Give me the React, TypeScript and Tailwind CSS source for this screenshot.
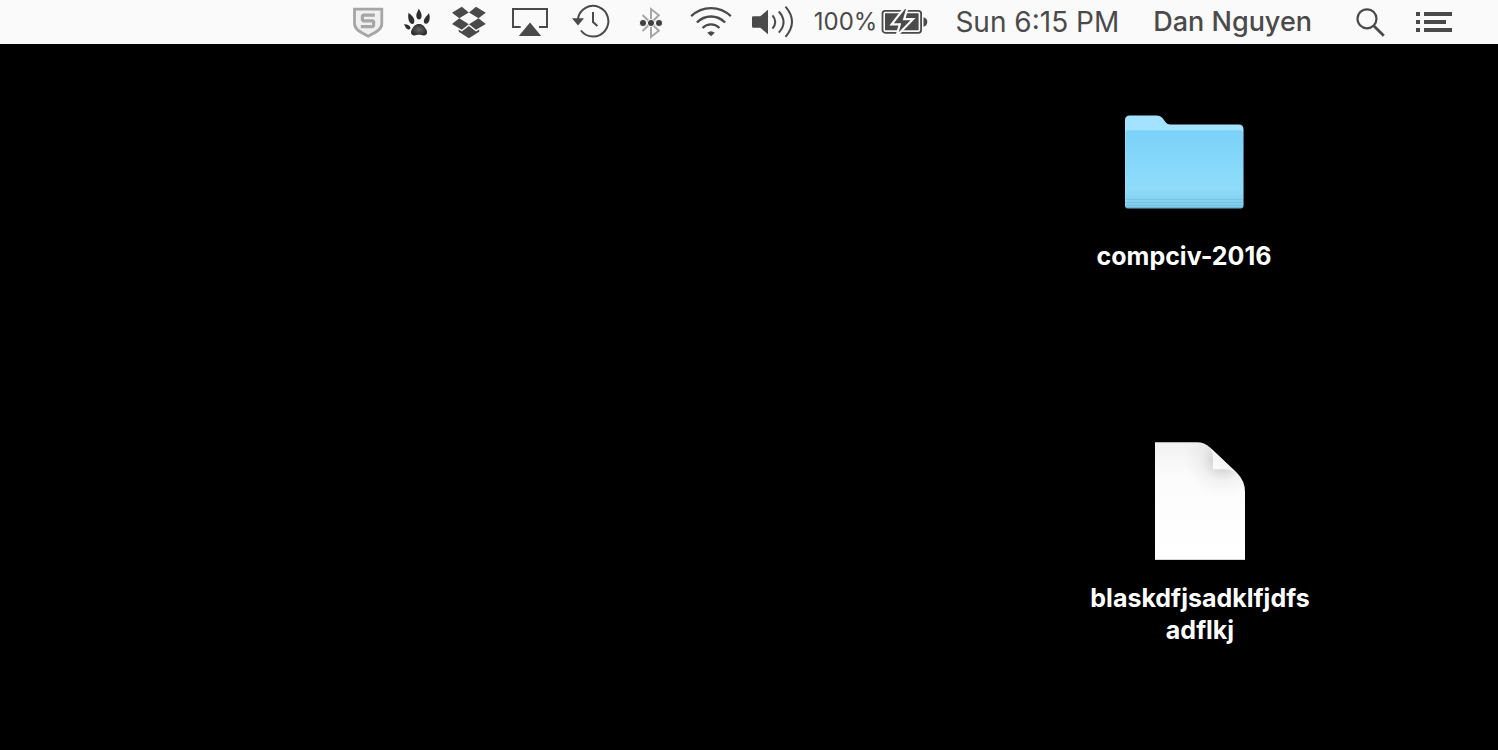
import type { ReactNode } from 'react';

type IconProps = { className: string; viewBox: string; children: ReactNode };

function Icon({ className, viewBox, children }: IconProps) {
  return (
    <svg className={`block h-11 shrink-0 ${className}`} viewBox={viewBox} fill="none" aria-hidden="true">
      {children}
    </svg>
  );
}

function MenuButton({ label, children }: { label: string; children: ReactNode }) {
  return (
    <button type="button" aria-label={label} className="shrink-0">
      {children}
    </button>
  );
}

function ShieldIcon() {
  return (
    <Icon className="w-8" viewBox="0 0 32 44">
      <path d="M2.5 9.2H29.8V23.5C29.8 29 25.5 31.5 16.2 36.2C7 31.5 2.5 29 2.5 23.5Z" fill="#f0f0f0" stroke="#a6a6a6" strokeWidth="2.800" />
      <path d="M22.800 15.200H11.400L10.400 16.200V19.800L11.400 20.800H20.800L21.600 21.600V25.600L20.600 26.600H8.800" stroke="#a6a6a6" strokeWidth="3.200" />
    </Icon>
  );
}

function PawIcon() {
  return (
    <Icon className="w-7" viewBox="0 0 28 44">
      <defs>
        <radialGradient id="pad">
          <stop offset="0" stopColor="#666" />
          <stop offset="1" stopColor="#2e2e2e" />
        </radialGradient>
      </defs>
      <path d="M15 24C19 24 20.200 26.500 21.800 28.800C24 32 23.200 35 20.600 35.400C18.500 35.700 17 34.800 15 34.800C13 34.800 11.500 35.700 9.500 35.400C6.900 35 6.100 32 8.200 28.800C9.800 26.500 11 24 15 24Z" fill="url(#pad)" />
      <g fill="#2e2e2e">
        <path d="M14.800 8.800C16.300 11.500 17.600 13.200 17.600 15.600C17.600 18 16.500 19.600 15 19.600C13.500 19.600 12.300 18 12.300 15.600C12.300 13.200 13.800 11.500 14.800 8.800Z" />
        <path d="M4.500 12.800C7.500 15 9.800 17.200 10.300 20C10.700 22.400 9.700 24 8.300 24C5.300 24 3.400 19 4.500 12.800Z" />
        <path d="M25 13.200C26.800 18.500 25 23.400 22.200 23.700C20.500 23.900 19.500 22.300 19.900 20.300C20.500 17.500 23 15.800 25 13.200Z" />
        <path d="M0 24.200C3.500 24 6 25.500 6.400 27.500C6.700 29 5.300 29.900 3.700 29.300C1.700 28.600 1.200 26.300 0 24.200Z" />
      </g>
    </Icon>
  );
}

function DropboxIcon() {
  return (
    <Icon className="w-9" viewBox="0 0 36 44">
      <path
        d="M9.800 6.800L16.800 12.400L7.300 18.300L0 12.800ZM24 6.800L17 12.400L26.500 18.300L33.800 12.800ZM0 24L7.300 18.300L16.800 24.200L9.800 29.700ZM33.800 24L26.500 18.300L17 24.200L24 29.700ZM16.900 26L24 31.400L27.200 29.500V31.800L16.900 38.200L6.700 31.800V29.500L9.800 31.400Z"
        fill="#4a4a4a"
      />
    </Icon>
  );
}

function AirPlayIcon() {
  return (
    <Icon className="w-11" viewBox="0 0 44 44">
      <path d="M12.700 27H5V9H39V27H31" stroke="#4a4a4a" strokeWidth="2" />
      <path d="M22 22.600L33.200 36H10.800Z" fill="#4a4a4a" />
    </Icon>
  );
}

function TimeMachineIcon() {
  return (
    <Icon className="w-10" viewBox="0 0 40 44">
      <path d="M5.900 19A15.300 15.300 0 1 1 8.900 30.500" stroke="#4a4a4a" strokeWidth="2" />
      <path d="M0 18.300H12L6 25.400Z" fill="#4a4a4a" />
      <path d="M21 12V22L25.400 26" stroke="#4a4a4a" strokeWidth="2" />
    </Icon>
  );
}

function BluetoothIcon() {
  return (
    <Icon className="w-9" viewBox="0 0 36 44">
      <path d="M10.500 15L26.800 30.700L19 37V9L26.800 15.300L10.500 31" stroke="#a6a6a6" strokeWidth="2" />
      <g fill="#3f3f3f" stroke="#fafafa" strokeWidth="1">
        <circle cx="11" cy="23" r="3.600" />
        <circle cx="19" cy="23" r="3.600" />
        <circle cx="27" cy="23" r="3.600" />
      </g>
    </Icon>
  );
}

function WifiIcon() {
  return (
    <Icon className="w-11" viewBox="0 0 44 44">
      <g stroke="#4a4a4a" strokeWidth="2.300">
        <path d="M3.200 16.200C14.500 5.500 31.500 5.500 42.800 16.200" />
        <path d="M8.900 22.500C17 14.500 29 14.500 37.100 22.500" />
        <path d="M14.500 28C19.500 23.300 26.500 23.300 31.500 28" />
      </g>
      <path d="M19.200 32.700Q23 29.600 26.800 32.700L23 36.300Z" fill="#4a4a4a" />
    </Icon>
  );
}

function VolumeIcon() {
  return (
    <Icon className="w-[42px]" viewBox="0 0 42 44">
      <path d="M1.200 16.300H8.300L16 9.800V34.200L8.300 27.700H1.200Q0 27.700 0 26.500V17.500Q0 16.300 1.200 16.300Z" fill="#4a4a4a" />
      <g stroke="#4a4a4a" strokeWidth="2">
        <path d="M20.500 15.300Q26 22 20.500 28.500" />
        <path d="M26.800 11.500Q36.300 22 26.800 32.700" />
        <path d="M33.500 6.600Q46.500 21.800 33.500 36.800" />
      </g>
    </Icon>
  );
}

function BatteryIcon() {
  return (
    <Icon className="w-[47px]" viewBox="0 0 47 44">
      <rect x="1.500" y="10.800" width="38.600" height="22" rx="2.800" stroke="#4a4a4a" strokeWidth="1.800" />
      <rect x="4" y="13.300" width="33.600" height="17" rx="0.500" fill="#4a4a4a" />
      <path d="M42.500 17.300Q46.300 18.500 46.300 22T42.500 26.700Z" fill="#4a4a4a" />
      <path d="M23.400 8L10.600 24.300H18.800L15.600 36L32 19.200H23.200L26.400 8Z" fill="#4a4a4a" stroke="#fafafa" strokeWidth="2.200" />
    </Icon>
  );
}

function SearchIcon() {
  return (
    <Icon className="w-[30px]" viewBox="0 0 30 44">
      <circle cx="11" cy="18.800" r="9.500" stroke="#4a4a4a" strokeWidth="2.200" />
      <path d="M17.700 25.700L27.800 35.700" stroke="#4a4a4a" strokeWidth="2.800" />
    </Icon>
  );
}

function ListIcon() {
  return (
    <Icon className="w-9" viewBox="0 0 36 44">
      <path d="M0 12H4V16H0ZM8 12H36V16H8ZM0 20H4V24H0ZM8 20H30V24H8ZM0 28H4V32H0ZM8 28H36V32H8Z" fill="#4a4a4a" />
    </Icon>
  );
}

function FolderIcon() {
  return (
    <svg className="block h-[94px] w-[119px]" viewBox="0 0 119 94" aria-hidden="true">
      <defs>
        <linearGradient id="front" x1="0" y1="0" x2="0" y2="1">
          <stop offset="0" stopColor="#7bd2f8" />
          <stop offset="0.750" stopColor="#8edcfa" />
          <stop offset="1" stopColor="#7fcbea" />
        </linearGradient>
      </defs>
      <path d="M0 5Q0 0.500 5 0.500H32Q35.500 0.500 37.500 3L41 7.700Q42.500 9.500 45 9.500H113.500Q118.500 9.500 118.500 14.500V90Q118.500 93.300 115.500 93.300H3Q0 93.300 0 90Z" fill="#a4e3ff" />
      <path d="M0.500 18.500Q0.500 15.300 4 15.300H114.500Q118 15.300 118 18.500V90Q118 93 115 93H3.500Q0.500 93 0.500 90Z" fill="url(#front)" />
      <path d="M0.500 84.500H118M0.500 87.500H118M0.500 90.500H118" stroke="#70b9d8" strokeWidth="1" opacity="0.500" />
      <path d="M1 92.800H117.500" stroke="#62a9c8" strokeWidth="0.900" />
    </svg>
  );
}

function DocumentIcon() {
  return (
    <svg className="block h-[118px] w-[90px]" viewBox="0 0 90 118" aria-hidden="true">
      <defs>
        <linearGradient id="sheet" x1="0" y1="0" x2="0" y2="1">
          <stop offset="0" stopColor="#f1f1f1" />
          <stop offset="0.300" stopColor="#fcfcfc" />
          <stop offset="1" stopColor="#ffffff" />
        </linearGradient>
        <radialGradient id="shade" gradientUnits="userSpaceOnUse" cx="68" cy="18" r="38">
          <stop offset="0.200" stopColor="#000" stopOpacity="0.150" />
          <stop offset="0.550" stopColor="#000" stopOpacity="0.040" />
          <stop offset="1" stopColor="#000" stopOpacity="0" />
        </radialGradient>
        <linearGradient id="fold" x1="0" y1="1" x2="0.600" y2="0.400">
          <stop offset="0" stopColor="#ffffff" />
          <stop offset="1" stopColor="#f2f2f2" />
        </linearGradient>
      </defs>
      <path d="M0 0.300H42Q49.500 0.300 55 5.500L82.500 31.500Q90 39 90 50V117.700H0Z" fill="url(#sheet)" />
      <path d="M0 0.300H42Q49.500 0.300 55 5.500L82.500 31.500Q90 39 90 50V117.700H0Z" fill="url(#shade)" />
      <path d="M55 5.500Q58 11 58 17V27.300H69Q76 27.300 82 31Z" fill="url(#fold)" />
      <path d="M0 117.500H90" stroke="#dcdcdc" strokeWidth="0.800" />
    </svg>
  );
}

function DesktopItem({ name, className, children }: { name: string; className: string; children: ReactNode }) {
  return (
    <a href="#" className={`flex w-56 flex-col items-center ${className}`}>
      {children}
      <span className="w-full text-center text-[25px] leading-8 font-bold break-all text-white">{name}</span>
    </a>
  );
}

export default function App() {
  return (
    <div className="min-h-screen bg-black font-['Inter',sans-serif]">
      <header className="flex h-11 items-center justify-end bg-[#fafafa] pr-[46px] text-[#4a4a4a]">
        <nav aria-label="Status" className="flex items-center gap-5">
          <MenuButton label="Security"><ShieldIcon /></MenuButton>
          <MenuButton label="Paw"><PawIcon /></MenuButton>
          <MenuButton label="Dropbox"><DropboxIcon /></MenuButton>
          <MenuButton label="AirPlay"><AirPlayIcon /></MenuButton>
          <MenuButton label="Time Machine"><TimeMachineIcon /></MenuButton>
          <MenuButton label="Bluetooth"><BluetoothIcon /></MenuButton>
          <MenuButton label="Wi-Fi"><WifiIcon /></MenuButton>
          <MenuButton label="Volume"><VolumeIcon /></MenuButton>
          <button type="button" className="flex items-center gap-1 text-2xl">
            100%
            <BatteryIcon />
          </button>
        </nav>
        <button type="button" className="ml-[27px] text-[28px] leading-11 whitespace-nowrap">Sun 6:15 PM</button>
        <button type="button" className="ml-[34px] text-[27px] leading-11 font-medium whitespace-nowrap">Dan Nguyen</button>
        <div className="ml-11 flex items-center gap-[30px]">
          <MenuButton label="Search"><SearchIcon /></MenuButton>
          <MenuButton label="Notifications"><ListIcon /></MenuButton>
        </div>
      </header>
      <main className="flex flex-col items-end pt-[71px]">
        <DesktopItem name="compciv-2016" className="mr-[202px] gap-[31px]">
          <FolderIcon />
        </DesktopItem>
        <DesktopItem name="blaskdfjsadklfjdfsadflkj" className="mt-[170px] mr-[186px] gap-[22px]">
          <DocumentIcon />
        </DesktopItem>
      </main>
    </div>
  );
}
